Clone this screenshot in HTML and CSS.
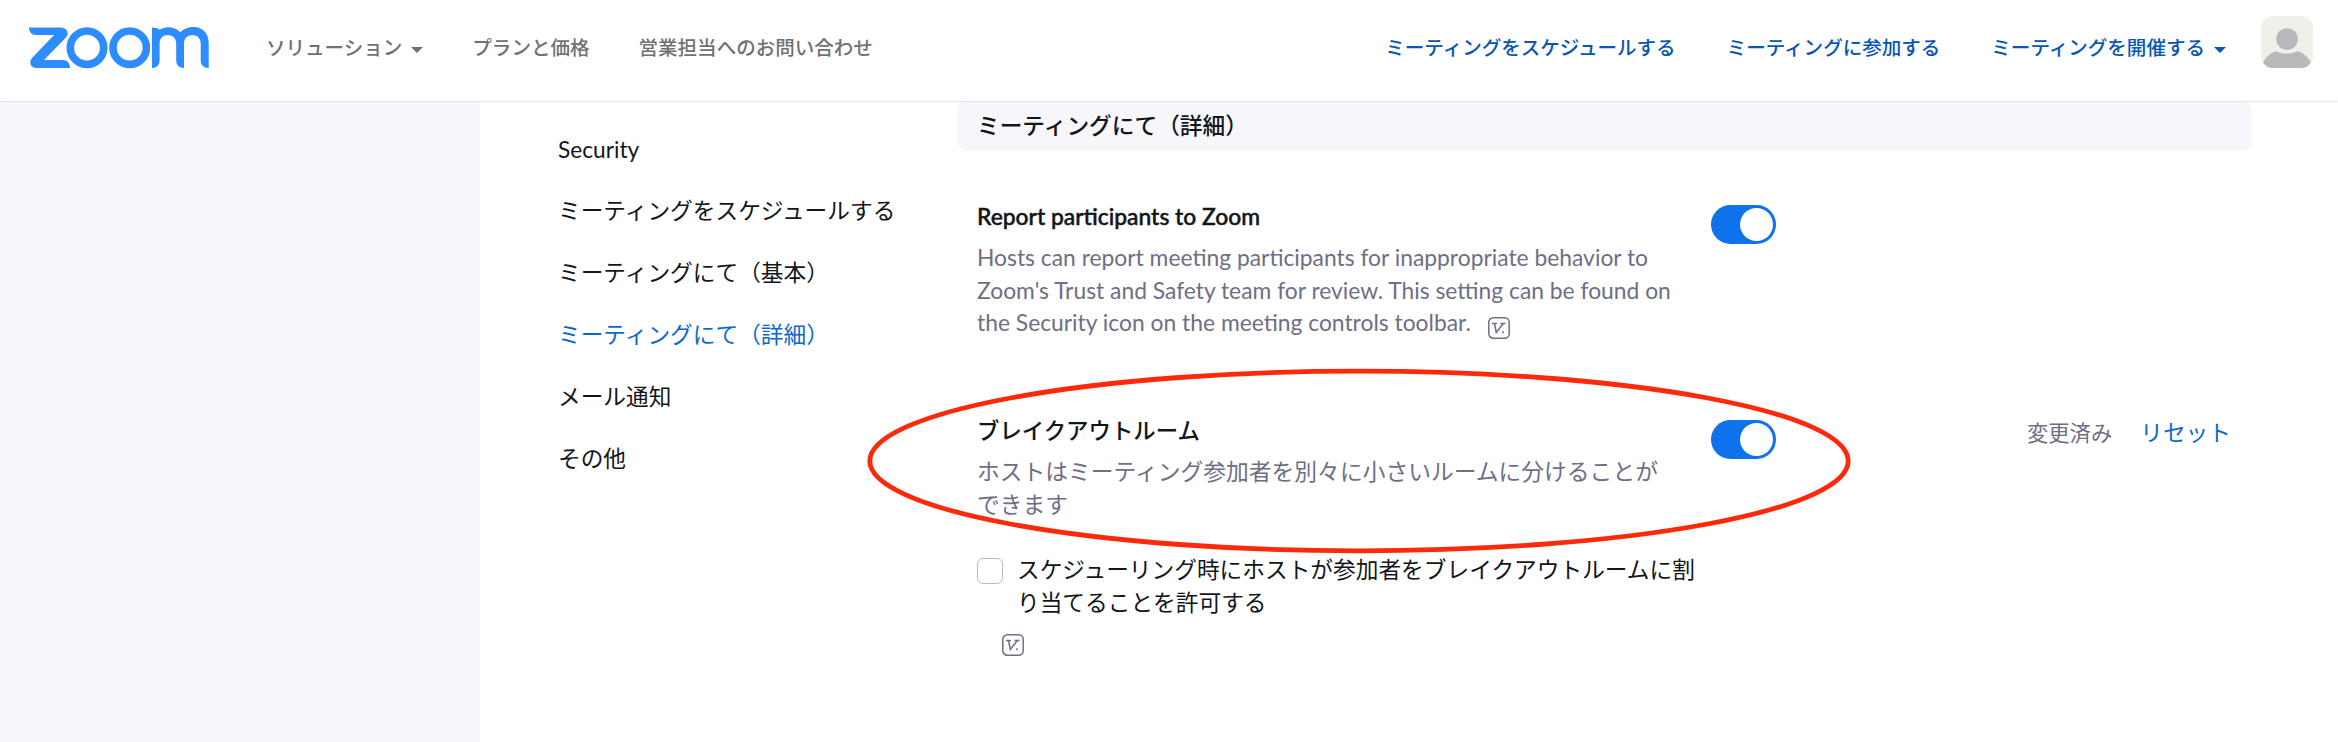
FILE: index.html
```html
<!DOCTYPE html>
<html lang="ja">
<head>
    <meta charset="UTF-8">
    <meta name="viewport" content="width=device-width, initial-scale=1.0">
    <title>マイ設定 - Zoom</title>
    <link rel="stylesheet" href="styles.css">
</head>
<body>

    <!-- HEADER -->
    <header class="header">
        <a class="logo" href="#">
            <svg width="180" height="42" viewBox="0 0 180 42" fill="none">
                <path d="M0 0.5H31C38 0.5 41 6 36.500 11L15 33H34C38.500 33 41 36.500 41 41H8C1 41 -0.500 34.500 3.500 30.500L25 8H7C2.500 8 0 5 0 0.500Z" fill="#2d8cff"/>
                <circle cx="58" cy="20.700" r="16.700" stroke="#2d8cff" stroke-width="7.600"/>
                <circle cx="100.700" cy="20.700" r="16.700" stroke="#2d8cff" stroke-width="7.600"/>
                <path d="M123 0.500C126 0.500 128.500 1.300 130.500 2.700C137 -1.200 146 -0.600 151.300 5.300C161 -4.500 179.700 -1 179.700 16V41C174.800 41 171.700 38 171.700 33.500V16.500C171.700 5.300 155 5.300 155 16.500V41C150.200 41 147.200 38 147.200 33.500V16.500C147.200 5.300 130.600 5.300 130.600 16.500V33.500C130.600 38 127.500 41 123 41Z" fill="#2d8cff"/>
            </svg>
        </a>
        <nav class="nav nav-left">
            <a href="#">ソリューション<span class="caret"></span></a>
            <a href="#">プランと価格</a>
            <a href="#">営業担当へのお問い合わせ</a>
        </nav>
        <nav class="nav nav-right">
            <a href="#">ミーティングをスケジュールする</a>
            <a href="#">ミーティングに参加する</a>
            <a href="#">ミーティングを開催する<span class="caret"></span></a>
        </nav>
        <svg class="avatar" width="52" height="52" viewBox="0 0 52 52">
            <rect width="52" height="52" fill="#f0f0eb"/>
            <circle cx="26" cy="23" r="10.800" fill="#b9b9b9"/>
            <path d="M2 46.500C5 40.500 10 36.500 15.500 35.200C22 38.400 30 38.400 36.500 35.200C42 36.500 47 40.500 50 46.500L46 52H6Z" fill="#b9b9b9"/>
        </svg>
    </header>

    <div class="main">
        <div class="side"></div>

        <!-- SETTINGS MENU -->
        <ul class="menu">
            <li>Security</li>
            <li>ミーティングをスケジュールする</li>
            <li>ミーティングにて（基本）</li>
            <li class="active">ミーティングにて（詳細）</li>
            <li>メール通知</li>
            <li>その他</li>
        </ul>

        <!-- SETTINGS -->
        <div class="content">
            <h2 class="section-title">ミーティングにて（詳細）</h2>

            <div class="setting report">
                <div class="info">
                    <h3>Report participants to Zoom</h3>
                    <p>Hosts can report meeting participants for inappropriate behavior to Zoom's Trust and Safety team for review. This setting can be found on the Security icon on the meeting controls toolbar.
                        <svg class="v-icon" width="22" height="22" viewBox="0 0 22 22" fill="none" stroke="#6e6e85">
                            <rect x="0.800" y="0.800" width="20.400" height="20.400" rx="4.500" stroke-width="1.500"/>
                            <path d="M4 6.500H9M6.500 6.500L8.300 15.500L15.300 6.500M12.500 6.500H17.500" stroke-width="1.500"/>
                            <circle cx="15" cy="15.200" r="1" fill="#6e6e85" stroke="none"/>
                        </svg>
                    </p>
                </div>
                <span class="toggle"></span>
            </div>

            <div class="setting breakout">
                <div class="info">
                    <h3>ブレイクアウトルーム</h3>
                    <p>ホストはミーティング参加者を別々に小さいルームに分けることができます</p>
                </div>
                <span class="toggle"></span>
                <div class="status">
                    <span class="changed">変更済み</span>
                    <a href="#">リセット</a>
                </div>
                <svg class="marker" width="986" height="188" viewBox="0 0 986 188" fill="none">
                    <ellipse cx="493" cy="94" rx="489.200" ry="89.800" stroke="#fc2a0b" stroke-width="4.800"/>
                </svg>
            </div>

            <div class="option">
                <span class="checkbox"></span>
                <p>スケジューリング時にホストが参加者をブレイクアウトルームに割り当てることを許可する</p>
            </div>
            <svg class="v-icon option-icon" width="22" height="22" viewBox="0 0 22 22" fill="none" stroke="#6e6e85">
                <rect x="0.800" y="0.800" width="20.400" height="20.400" rx="4.500" stroke-width="1.500"/>
                <path d="M4 6.500H9M6.500 6.500L8.300 15.500L15.300 6.500M12.500 6.500H17.500" stroke-width="1.500"/>
                <circle cx="15" cy="15.200" r="1" fill="#6e6e85" stroke="none"/>
            </svg>
        </div>
    </div>

</body>
</html>
```
FILE: styles.css
```css
* { margin: 0; padding: 0; box-sizing: border-box; }
body {
    background: #fff;
    color: #131619;
    font-family: Lato, 'Noto Sans CJK JP', sans-serif;
    font-size: 22.7px;
    line-height: 32.7px;
    height: 742px;
    overflow: hidden;
}

a {
    color: #0b68cf;
    text-decoration: none;
}

/* header */
.header {
    display: flex;
    position: relative;
    z-index: 1;
    height: 101px;
    padding-left: 29px;
    padding-right: 25px;
    background: #fff;
    box-shadow: 0 0 2px rgba(35, 35, 80, 0.3);
}

.logo {
    width: 180px;
    height: 42px;
    margin-top: 27px;
}

.nav {
    display: flex;
    height: 96px;
    align-items: center;
    font-size: 19.55px;
    font-weight: 500;
}

.nav a { white-space: nowrap; }

.nav-left {
    gap: 49px;
    margin-left: 57px;
}

.nav-left a { color: #717171; }

.nav-right {
    gap: 51px;
    margin-left: auto;
}

.nav-right a { color: #0956b5; }

.caret {
    display: inline-block;
    margin-left: 9px;
    vertical-align: 2px;
    border: 6.5px solid transparent;
    border-top-color: currentColor;
    border-bottom: 0;
}

.avatar {
    margin-top: 16px;
    margin-left: 35px;
    border-radius: 12px;
}

/* page body */
.main {
    display: flex;
    height: 641px;
}

.side {
    width: 480px;
    background: #f7f7fb;
}

.menu {
    width: 477px;
    padding-top: 17px;
    padding-left: 78px;
    list-style: none;
}

.menu li {
    height: 62px;
    line-height: 62px;
}

.menu li:first-child { padding-top: 1px; }

.menu .active { color: #0b68cf; }

.content { width: 1295px; }

.section-title {
    height: 50px;
    padding-left: 20px;
    border-radius: 11px;
    background: #f7f7fb;
    font-size: 22.7px;
    font-weight: 500;
    line-height: 50px;
}

.setting {
    display: flex;
    position: relative;
    margin-top: 49px;
    padding-left: 20px;
}

.info { width: 704px; }

.info h3 {
    height: 41px;
    font-size: 22.4px;
    font-weight: 500;
}

.info p {
    width: 700px;
    color: #6e6e85;
}

.report .info { font-size: 22.84px; }

.report h3 {
    font-size: 22.84px;
    -webkit-text-stroke: 0.5px;
}

.v-icon { vertical-align: -8px; }
.info .v-icon { margin-left: 11px; }

.toggle {
    width: 65px;
    height: 39px;
    margin-top: 5px;
    margin-left: 30px;
    border-radius: 20px;
    background: #0e72ed;
}

.toggle::after {
    content: "";
    display: block;
    width: 33px;
    height: 33px;
    margin: 3px 3px 3px 29px;
    border-radius: 50%;
    background: #fff;
}

.breakout { margin-top: 76px; }

.breakout p {
    width: 686px;
    font-size: 22.77px;
}

.status {
    display: flex;
    gap: 28px;
    margin-left: 251px;
    padding-top: 2px;
}

.changed {
    color: #6e6e85;
    font-size: 21.3px;
}

/* red circle drawn round the setting */
.marker {
    position: absolute;
    top: -48px;
    left: -91px;
}

.option {
    display: flex;
    margin-top: 32px;
    padding-left: 20px;
}

.option p { width: 684px; }

.checkbox {
    width: 26px;
    height: 26px;
    margin-top: 4px;
    margin-right: 14px;
    border: 1.5px solid #babacc;
    border-radius: 6px;
}

.option-icon {
    display: block;
    margin-top: 15px;
    margin-left: 45px;
}
```
